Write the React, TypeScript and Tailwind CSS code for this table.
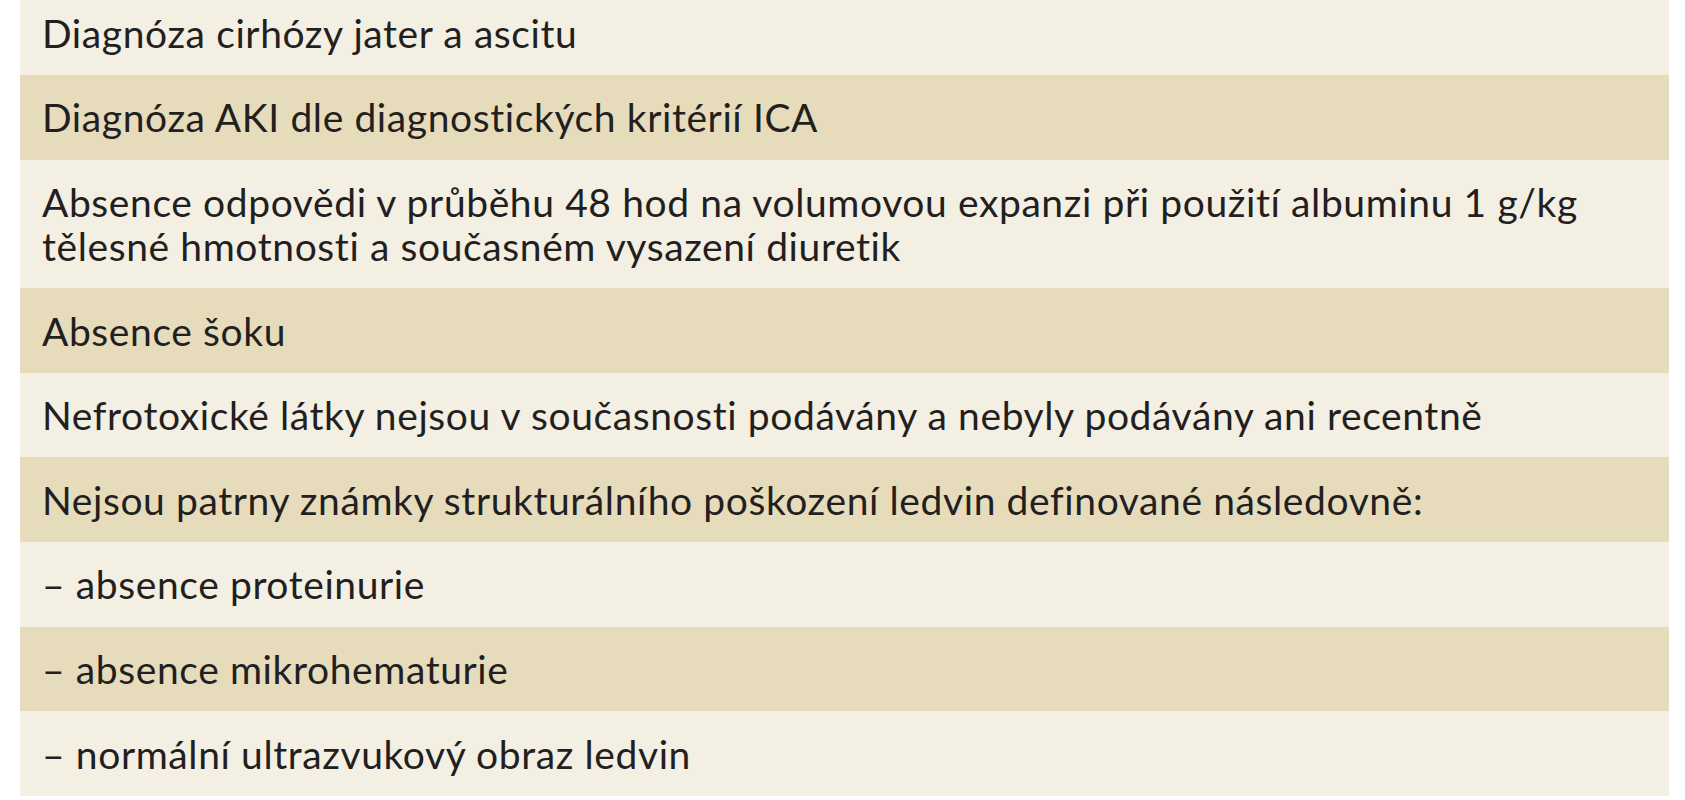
import React from 'react';

const rows = [
  'Diagnóza cirhózy jater a ascitu',
  'Diagnóza AKI dle diagnostických kritérií ICA',
  'Absence odpovědi v průběhu 48 hod na volumovou expanzi při použití albuminu 1 g/kg tělesné hmotnosti a současném vysazení diuretik',
  'Absence šoku',
  'Nefrotoxické látky nejsou v současnosti podávány a nebyly podávány ani recentně',
  'Nejsou patrny známky strukturálního poškození ledvin definované následovně:',
  '– absence proteinurie',
  '– absence mikrohematurie',
  '– normální ultrazvukový obraz ledvin',
];

const App: React.FC = () => {
  return (
    <div className="min-h-screen bg-white pl-[20px] pr-[16px] overflow-hidden">
      <div className="-mt-[9.5px] flex flex-col font-['Lato',sans-serif] text-[39px] leading-[44px] tracking-[0.6px] text-[#231f20]">
        {rows.map((text, i) => (
          <div
            key={i}
            className={`pl-[22px] pr-[40px] py-[20.3px] ${i % 2 === 0 ? 'bg-[#f4efe3]' : 'bg-[#e6dcbc]'}`}
          >
            {text}
          </div>
        ))}
      </div>
    </div>
  );
};

export default App;
